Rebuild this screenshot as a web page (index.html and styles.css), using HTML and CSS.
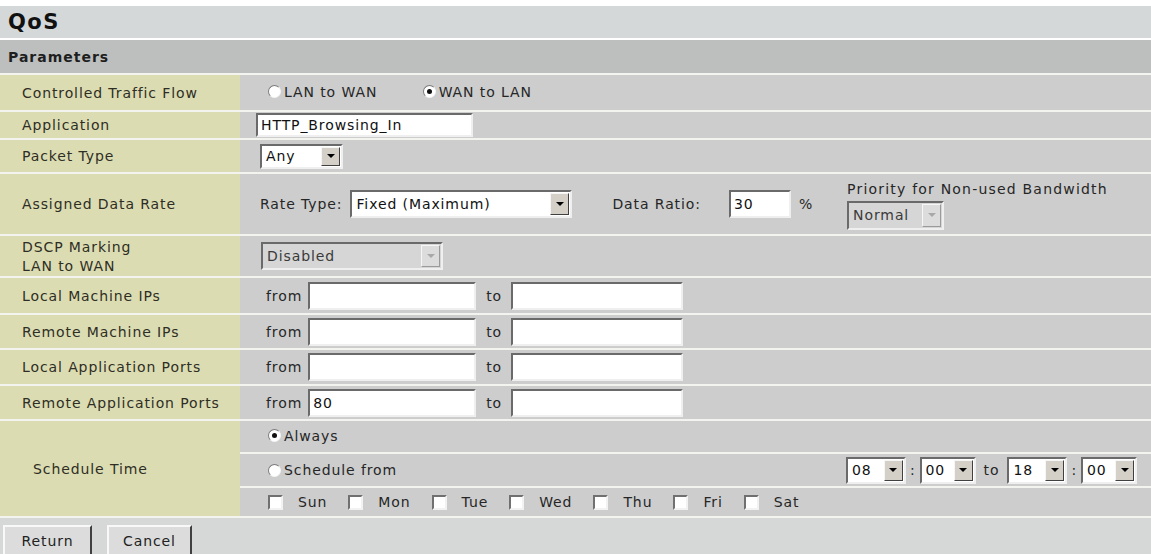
FILE: index.html
```html
<!DOCTYPE html>
<html lang="en">
<head>
  <meta charset="UTF-8">
  <title>QoS</title>
  <link rel="stylesheet" href="styles.css">
</head>
<body>

  <div class="title">QoS</div>
  <div class="section">Parameters</div>

  <table class="params">
    <tr class="h-flow">
      <td class="label">Controlled Traffic Flow</td>
      <td class="value">
        <label class="opt"><input type="radio" class="radio" name="flow">LAN to WAN</label>
        <label class="opt opt-wan"><input type="radio" class="radio" name="flow" checked>WAN to LAN</label>
      </td>
    </tr>
    <tr class="h-app">
      <td class="label">Application</td>
      <td class="value"><input type="text" class="field f-app" value="HTTP_Browsing_In"></td>
    </tr>
    <tr class="h-packet">
      <td class="label">Packet Type</td>
      <td class="value">
        <span class="combo c-packet"><span class="combo-val">Any</span><span class="combo-btn"></span></span>
      </td>
    </tr>
    <tr class="h-rate">
      <td class="label">Assigned Data Rate</td>
      <td class="value">
        <div class="rate">
          <span>Rate Type:</span>
          <span class="combo c-rate"><span class="combo-val">Fixed (Maximum)</span><span class="combo-btn"></span></span>
          <span class="ratio-label">Data Ratio:</span>
          <input type="text" class="field f-ratio" value="30">
          <span class="pct">%</span>
          <div class="priority">
            <span class="priority-label">Priority for Non-used Bandwidth</span>
            <span class="combo c-normal off"><span class="combo-val">Normal</span><span class="combo-btn"></span></span>
          </div>
        </div>
      </td>
    </tr>
    <tr class="h-dscp">
      <td class="label two-line">DSCP Marking<br>LAN to WAN</td>
      <td class="value">
        <span class="combo c-dscp off"><span class="combo-val">Disabled</span><span class="combo-btn"></span></span>
      </td>
    </tr>
    <tr class="h-ip1">
      <td class="label">Local Machine IPs</td>
      <td class="value">
        <div class="range">
          <span class="from">from</span><input type="text" class="field f-from" value="">
          <span class="to">to</span><input type="text" class="field f-to" value="">
        </div>
      </td>
    </tr>
    <tr class="h-ip2">
      <td class="label">Remote Machine IPs</td>
      <td class="value">
        <div class="range">
          <span class="from">from</span><input type="text" class="field f-from" value="">
          <span class="to">to</span><input type="text" class="field f-to" value="">
        </div>
      </td>
    </tr>
    <tr class="h-port1">
      <td class="label">Local Application Ports</td>
      <td class="value">
        <div class="range">
          <span class="from">from</span><input type="text" class="field f-from" value="">
          <span class="to">to</span><input type="text" class="field f-to" value="">
        </div>
      </td>
    </tr>
    <tr class="h-port2">
      <td class="label">Remote Application Ports</td>
      <td class="value">
        <div class="range">
          <span class="from">from</span><input type="text" class="field f-from" value="80">
          <span class="to">to</span><input type="text" class="field f-to" value="">
        </div>
      </td>
    </tr>
    <tr class="h-always">
      <td class="label sched" rowspan="3">Schedule Time</td>
      <td class="value">
        <label class="opt"><input type="radio" class="radio" name="sched" checked>Always</label>
      </td>
    </tr>
    <tr class="h-from">
      <td class="value">
        <div class="sched-row">
          <label class="opt"><input type="radio" class="radio" name="sched">Schedule from</label>
          <div class="times">
            <span class="combo c-time"><span class="combo-val">08</span><span class="combo-btn"></span></span>
            <span class="colon">:</span>
            <span class="combo c-min"><span class="combo-val">00</span><span class="combo-btn"></span></span>
            <span class="time-to">to</span>
            <span class="combo c-time"><span class="combo-val">18</span><span class="combo-btn"></span></span>
            <span class="colon">:</span>
            <span class="combo c-min"><span class="combo-val">00</span><span class="combo-btn"></span></span>
          </div>
        </div>
      </td>
    </tr>
    <tr class="h-days">
      <td class="value">
        <div class="days">
          <label class="day"><input type="checkbox" class="check">Sun</label>
          <label class="day"><input type="checkbox" class="check">Mon</label>
          <label class="day"><input type="checkbox" class="check">Tue</label>
          <label class="day"><input type="checkbox" class="check">Wed</label>
          <label class="day"><input type="checkbox" class="check">Thu</label>
          <label class="day"><input type="checkbox" class="check">Fri</label>
          <label class="day"><input type="checkbox" class="check">Sat</label>
        </div>
      </td>
    </tr>
  </table>

  <div class="actions">
    <button class="btn btn-return">Return</button>
    <button class="btn btn-cancel">Cancel</button>
  </div>

</body>
</html>
```

FILE: styles.css
```css
body {
  margin: 0;
  background: #fff;
  font-family: "DejaVu Sans", "Liberation Sans", sans-serif;
  font-size: 14px;
  letter-spacing: 0.9px;
  color: #333;
  overflow: hidden;
}

.title {
  margin-top: 6px;
  height: 32px;
  background: #d4d8d8;
  display: flex;
  align-items: center;
  padding-left: 8px;
  font-size: 21px;
  font-weight: bold;
  letter-spacing: 1.5px;
  color: #111;
}

.section {
  margin-top: 2px;
  height: 33px;
  background: #bdbfbf;
  display: flex;
  align-items: center;
  padding-left: 8px;
  font-weight: bold;
  letter-spacing: 1px;
  color: #1e1e1e;
}

.params {
  width: 100%;
  border-collapse: separate;
  border-spacing: 0 2px;
  background: #f3f3f0;
}

.params td {
  padding: 0;
}

.params td.label {
  box-sizing: border-box;
  width: 240px;
  padding-left: 22px;
  background: #dcdcb3;
  color: #2e2e24;
}

.params td.two-line {
  line-height: 19px;
  padding-top: 2px;
}

.params td.sched {
  padding-left: 33px;
}

.params td.value {
  padding-left: 18px;
  background: #cdcdcd;
  color: #262626;
}

.h-flow { height: 35px; }
.h-app { height: 26px; }
.h-packet { height: 32px; }
.h-rate { height: 60px; }
.h-dscp { height: 40px; }
.h-ip1 { height: 35px; }
.h-ip2 { height: 33px; }
.h-port1 { height: 34px; }
.h-port2 { height: 33px; }
.h-always { height: 31px; }
.h-from { height: 32px; }
.h-days { height: 28px; }

/* radios and checkboxes, classic look */
.opt {
  display: inline-flex;
  align-items: center;
  margin-left: 10px;
}

.opt-wan {
  margin-left: 40px;
}

.radio {
  appearance: none;
  -webkit-appearance: none;
  position: relative;
  width: 13px;
  height: 13px;
  margin: 0 3px 0 0;
  border-radius: 50%;
  background: #fff;
  border: 1px solid;
  border-color: #7a7a7a #f4f4f4 #f4f4f4 #7a7a7a;
}

.radio:checked::after {
  content: "";
  position: absolute;
  left: 3px;
  top: 3px;
  width: 5px;
  height: 5px;
  border-radius: 50%;
  background: #111;
}

.check {
  appearance: none;
  -webkit-appearance: none;
  box-sizing: border-box;
  width: 15px;
  height: 15px;
  margin: 0 15px 0 0;
  background: #fff;
  border: 2px solid;
  border-color: #707070 #f2f2f2 #f2f2f2 #707070;
}

/* text fields */
.field {
  box-sizing: border-box;
  height: 28px;
  padding: 0 3px;
  border: 2px solid;
  border-color: #6a6a6a #efefef #efefef #6a6a6a;
  background: #fff;
  font: inherit;
  letter-spacing: inherit;
  color: #111;
  outline: none;
  vertical-align: middle;
}

.f-app {
  width: 217px;
  height: 24px;
  margin-left: -2px;
}

.f-ratio { width: 62px; }
.f-from { width: 168px; margin-left: 6px; }
.f-to { width: 172px; margin-left: 9px; }

/* drop-down boxes */
.combo {
  box-sizing: border-box;
  display: inline-flex;
  align-items: stretch;
  height: 26px;
  border: 2px solid;
  border-color: #6a6a6a #efefef #efefef #6a6a6a;
  background: #fff;
  vertical-align: middle;
  color: #111;
}

.combo-val {
  flex: 1;
  display: flex;
  align-items: center;
  padding-left: 4px;
  white-space: nowrap;
  overflow: hidden;
}

.combo-btn {
  box-sizing: border-box;
  width: 19px;
  margin: 1px;
  display: flex;
  align-items: center;
  justify-content: center;
  background: #d4d0c8;
  border: 1px solid;
  border-color: #f6f6f6 #404040 #404040 #f6f6f6;
}

.combo-btn::after {
  content: "";
  border-left: 4px solid transparent;
  border-right: 4px solid transparent;
  border-top: 4px solid #000;
}

.combo.off {
  background: #d6d6d6;
  color: #3a3a3a;
}

.combo.off .combo-btn {
  background: #dcdcdc;
  border-color: #f6f6f6 #9a9a9a #9a9a9a #f6f6f6;
}

.combo.off .combo-btn::after {
  border-top-color: #a8a8a8;
}

.c-packet { width: 83px; height: 25px; margin-left: 2px; }
.c-rate { width: 222px; height: 28px; margin-left: 8px; }
.c-normal { width: 97px; height: 29px; }
.c-dscp { width: 182px; height: 28px; margin-left: 3px; }
.c-time { width: 60px; height: 27px; }
.c-min { width: 56px; height: 27px; }

/* assigned data rate row */
.rate {
  display: flex;
  align-items: center;
  margin-left: 2px;
}

.ratio-label { margin-left: 40px; }
.f-ratio { margin-left: 28px; }
.pct { margin-left: 8px; }

.priority {
  display: flex;
  flex-direction: column;
  align-items: flex-start;
  margin-left: 34px;
  margin-top: 2px;
  gap: 4px;
}

.priority-label {
  letter-spacing: 1.2px;
}

/* from / to rows */
.range {
  display: flex;
  align-items: center;
}

.from { margin-left: 8px; }
.to { margin-left: 10px; }

/* schedule rows */
.sched-row {
  display: flex;
  align-items: center;
  justify-content: space-between;
  padding-right: 14px;
}

.times {
  display: flex;
  align-items: center;
}

.colon { margin: 0 4px; }
.time-to { margin: 0 8px; }

.days {
  display: flex;
  align-items: center;
  margin-left: 10px;
}

.day {
  display: inline-flex;
  align-items: center;
  margin-right: 21px;
}

/* bottom buttons */
.actions {
  height: 40px;
  background: #d6d8d8;
  padding: 7px 0 0 3px;
  display: flex;
  gap: 15px;
  align-items: flex-start;
}

.btn {
  height: 32px;
  padding: 0;
  background: #dcdcdc;
  border: 2px solid;
  border-color: #f8f8f8 #404040 #404040 #f8f8f8;
  font: inherit;
  letter-spacing: inherit;
  color: #222;
}

.btn-return { width: 89px; }
.btn-cancel { width: 85px; }
```
